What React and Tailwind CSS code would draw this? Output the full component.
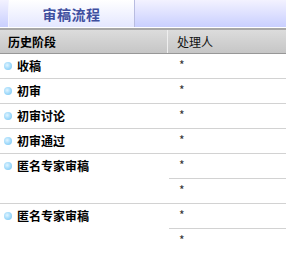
import React from "react";

const rows = [
  { name: "收稿", subs: 1 },
  { name: "初审", subs: 1 },
  { name: "初审讨论", subs: 1 },
  { name: "初审通过", subs: 1 },
  { name: "匿名专家审稿", subs: 2 },
  { name: "匿名专家审稿", subs: 2 },
];

function Bullet() {
  return (
    <span className="inline-block w-[8px] h-[8px] rounded-full bg-[radial-gradient(circle_at_40%_40%,#e2f5ff_0%,#a3dbfb_50%,#6fc0ef_100%)]" />
  );
}

export default function App() {
  return (
    <div
      className="w-[286px] h-[253px] overflow-hidden bg-white"
      style={{ fontFamily: '"Noto Sans CJK SC", "Noto Sans", sans-serif' }}
    >
      <div className="h-[27px] flex pl-[8px] bg-gradient-to-b from-[#f3f2ff] to-[#c9cfff] border-b border-white box-content">
        <div className="w-[127px] h-full flex items-center justify-center border-l border-[#f4f4ff] border-r border-r-[#b8bce0] bg-gradient-to-b from-[#ffffff] to-[#e4e7ff] text-[14px] font-bold text-[#3f4f9f] leading-none tracking-[0.5px]">
          审稿流程
        </div>
      </div>
      <div className="h-[23px] flex border-t-2 border-t-[#a7a7a7] border-b border-b-[#979797] bg-gradient-to-b from-[#dcdcdc] to-[#c6c6c6] box-content">
        <div className="w-[168px] flex items-center pl-[8px] text-[12px] font-bold text-black border-r border-r-[#efefef]">
          历史阶段
        </div>
        <div className="flex-1 flex items-center pl-[9px] text-[12px] text-[#111]">
          处理人
        </div>
      </div>
      {rows.map((r, i) => (
        <div key={i} className="flex border-b border-[#d2d2d2]">
          <div className="w-[169px] h-[24px] flex items-center gap-[5px] pl-[4px] text-[12px] font-bold text-black">
            <Bullet />
            <span>{r.name}</span>
          </div>
          <div className="flex-1 flex flex-col">
            {Array.from({ length: r.subs }).map((_, j) => (
              <div
                key={j}
                className={
                  "h-[24px] flex items-center pl-[10px] text-[12px] text-[#333] " +
                  (j < r.subs - 1 ? "border-b border-[#d2d2d2] box-content" : "")
                }
              >
                <span className="-mt-[2px]">*</span>
              </div>
            ))}
          </div>
        </div>
      ))}
    </div>
  );
}
